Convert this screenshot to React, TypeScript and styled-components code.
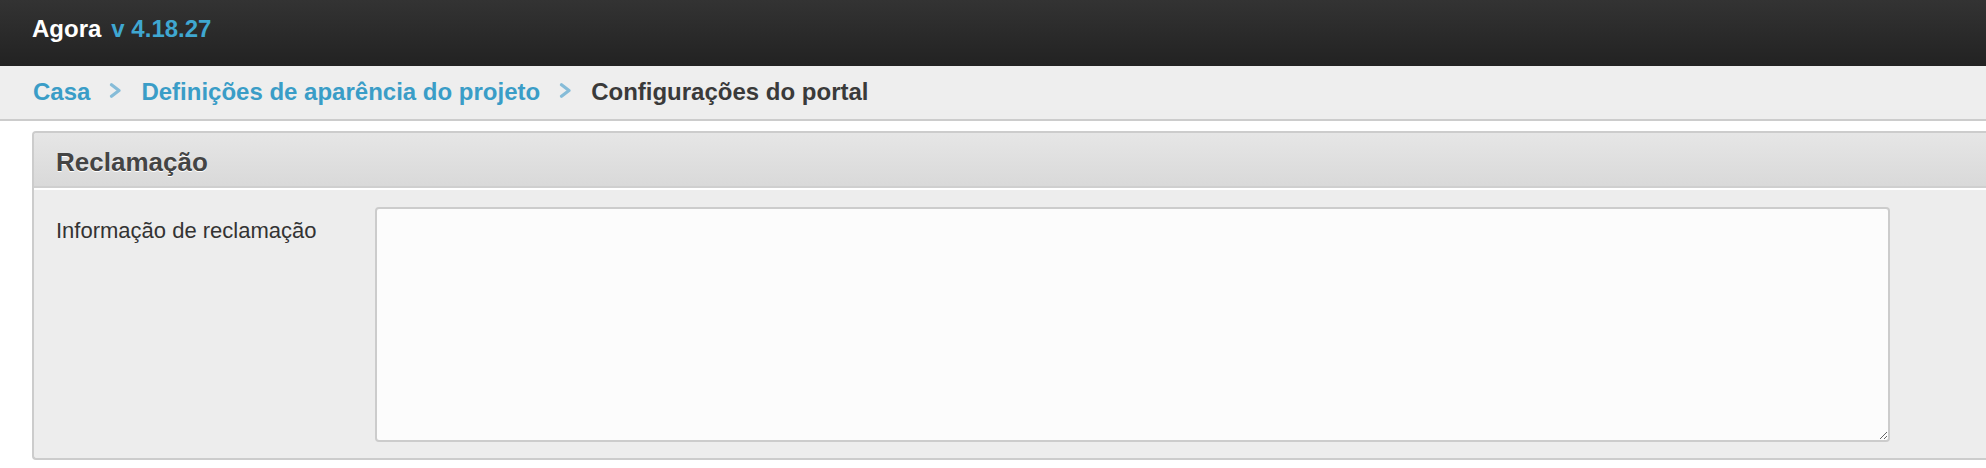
import React from "react";
import styled, { createGlobalStyle } from "styled-components";

const GlobalStyle = createGlobalStyle`
  html, body {
    margin: 0;
    padding: 0;
    background: #ffffff;
    overflow: hidden;
    font-family: "Liberation Sans", Arial, Helvetica, sans-serif;
  }
`;

const TopBar = styled.header`
  height: 66px;
  box-sizing: border-box;
  padding: 17px 32px 0;
  background: linear-gradient(#333333, #222222);
  display: flex;
  align-items: flex-start;
  font-size: 24px;
  line-height: 24px;
  font-weight: bold;
`;

const Brand = styled.span`
  color: #ffffff;
`;

const Version = styled.span`
  color: #3fa7d1;
  margin-left: 10px;
`;

const Crumbs = styled.nav`
  height: 55px;
  box-sizing: border-box;
  padding: 14px 33px 0;
  background: #eeeeee;
  border-bottom: 2px solid #cccccc;
  display: flex;
  align-items: flex-start;
  gap: 19px;
  font-size: 24px;
  line-height: 24px;
  font-weight: bold;
`;

const CrumbLink = styled.a`
  color: #3a9dc7;
  text-decoration: none;
  white-space: nowrap;
`;

const CrumbCurrent = styled.span`
  color: #3a3a3a;
  white-space: nowrap;
`;

const Sep = styled.svg`
  width: 13px;
  height: 15px;
  margin-top: 3px;
  flex: none;
`;

const Chevron = () => (
  <Sep viewBox="0 0 13 15">
    <path d="M2.5 1.8 L10 7.5 L2.5 13.2" fill="none" stroke="#86bcd8" strokeWidth="3.2" strokeLinecap="round" strokeLinejoin="round" />
  </Sep>
);

const Panel = styled.section`
  margin: 10px 0 0 32px;
  border: 2px solid #cccccc;
  border-right: none;
  border-radius: 4px 0 0 4px;
  overflow: hidden;
  background: #ededed;
`;

const PanelHead = styled.div`
  height: 55px;
  box-sizing: border-box;
  padding: 16px 22px 0;
  background: linear-gradient(#e6e6e6, #d9d9d9);
  border-bottom: 2px solid #cfcfcf;
  font-size: 26px;
  line-height: 26px;
  font-weight: bold;
  color: #444444;
  text-shadow: 0 1px 0 #ffffff;
`;

const PanelBody = styled.div`
  border-top: 2px solid #ffffff;
  padding: 17px 22px 16px;
`;

const FieldRow = styled.div`
  display: flex;
  align-items: flex-start;
`;

const FieldLabel = styled.label`
  width: 319px;
  flex: none;
  padding-top: 13px;
  font-size: 22px;
  line-height: 22px;
  color: #333333;
`;

const TextArea = styled.textarea`
  width: 1515px;
  height: 235px;
  box-sizing: border-box;
  border: 2px solid #cccccc;
  border-radius: 4px;
  background: #fcfcfc;
  margin: 0;
  padding: 8px;
  font-family: "Liberation Sans", Arial, sans-serif;
  font-size: 18px;
  outline: none;
  flex: none;
`;

export default function App() {
  return (
    <>
      <GlobalStyle />
      <TopBar>
        <Brand>Agora</Brand>
        <Version>v 4.18.27</Version>
      </TopBar>
      <Crumbs>
        <CrumbLink href="#">Casa</CrumbLink>
        <Chevron />
        <CrumbLink href="#">Definições de aparência do projeto</CrumbLink>
        <Chevron />
        <CrumbCurrent>Configurações do portal</CrumbCurrent>
      </Crumbs>
      <Panel>
        <PanelHead>Reclamação</PanelHead>
        <PanelBody>
          <FieldRow>
            <FieldLabel htmlFor="info">Informação de reclamação</FieldLabel>
            <TextArea id="info" />
          </FieldRow>
        </PanelBody>
      </Panel>
    </>
  );
}
